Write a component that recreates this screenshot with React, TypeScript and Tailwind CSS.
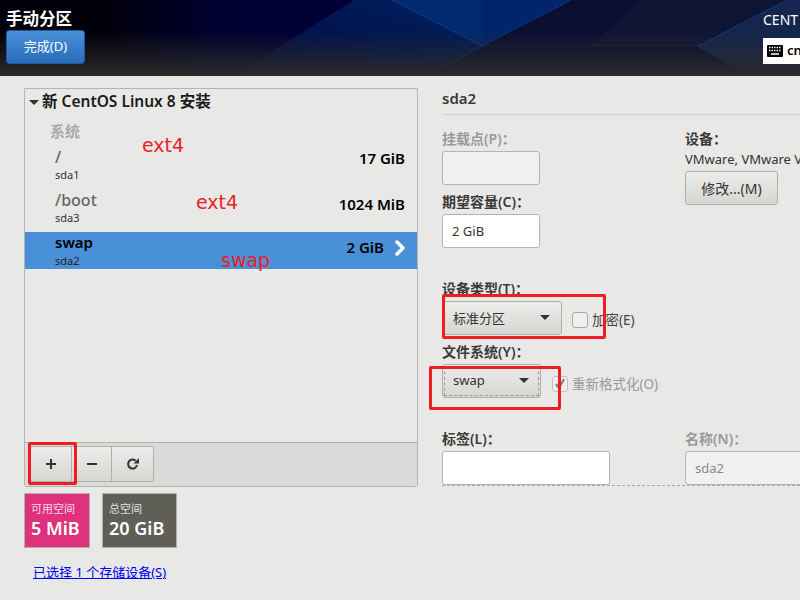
import { ChevronRight } from 'lucide-react'

const FONT = "font-['Noto_Sans','Noto_Sans_CJK_SC',sans-serif]"

function HeaderArt() {
  return (
    <svg className="absolute inset-0" width="800" height="76" viewBox="0 0 800 76">
      <defs>
        <linearGradient id="fade" x1="0" y1="0" x2="0" y2="1">
          <stop offset="0" stopColor="#2a2a2a" stopOpacity="0" />
          <stop offset="0.4" stopColor="#2a2a2a" stopOpacity="0" />
          <stop offset="1" stopColor="#2a2a2a" stopOpacity="1" />
        </linearGradient>
        <linearGradient id="sweep" x1="0" y1="0" x2="1" y2="0">
          <stop offset="0" stopColor="#00000a" />
          <stop offset="0.4" stopColor="#000030" />
          <stop offset="1" stopColor="#00003a" />
        </linearGradient>
        <linearGradient id="wedge" x1="0" y1="1" x2="1" y2="0">
          <stop offset="0" stopColor="#000a40" />
          <stop offset="1" stopColor="#00205f" />
        </linearGradient>
      </defs>
      <rect width="800" height="76" fill="#00000a" />
      <rect x="100" width="300" height="76" fill="url(#sweep)" />
      <polygon points="354,0 392,0 482,46 426,76 234,76" fill="url(#wedge)" />
      <polygon points="392,0 482,0 482,46" fill="#002a70" />
      <polygon points="482,0 571,0 482,46" fill="#02246a" />
      <polygon points="482,46 571,0 800,0 800,76 426,76" fill="#0a0e30" />
      <polygon points="640,0 787,0 698,46 590,46" fill="#0f1434" />
      <polygon points="698,46 787,0 800,0 800,76 750,76" fill="#14264e" />
      <path d="M392 0 L482 46 L571 0 M482 46 L426 76 M698 46 L787 0 M698 46 L750 76" stroke="#0a4aa0" strokeWidth="1" fill="none" opacity="0.7" />
      <path d="M482 46 L698 46" stroke="#1a2c5c" strokeWidth="1" fill="none" opacity="0.6" />
      <rect width="800" height="76" fill="url(#fade)" />
    </svg>
  )
}

function Row({ name, dev, size, sizeClass }: { name: string; dev: string; size: string; sizeClass: string }) {
  return (
    <div className="h-[37px] flex items-center pl-[30px] pr-[12px] leading-none">
      <div className="flex-1">
        <div className="text-[16px] font-medium h-[20px] text-[#666]">{name}</div>
        <div className="text-[11px] text-[#333]">{dev}</div>
      </div>
      <div className={`text-[15px] font-semibold text-black ${sizeClass}`}>{size}</div>
    </div>
  )
}

function Field({ label, width, value, disabled }: { label: string; width: string; value?: string; disabled?: boolean }) {
  return (
    <div>
      <div className={`text-[14px] font-semibold h-[21px] leading-[18px] ${disabled ? 'text-[#999]' : 'text-[#3a3a3a]'}`}>{label}</div>
      <div
        className={`${width} h-[34px] border border-[#b5b5b0] rounded-[3px] text-[13px] leading-[32px] pl-[9px] ${
          disabled ? 'bg-[#f0f0f0] text-[#888]' : 'bg-white text-[#333]'
        }`}
      >
        {value}
      </div>
    </div>
  )
}

function Select({ text, width, focused }: { text: string; width: string; focused?: boolean }) {
  return (
    <div className={`relative ${width} h-[34px] flex items-center justify-between pl-[10px] pr-[11px] border border-[#b0b0aa] rounded-[3px] bg-gradient-to-b from-[#ececea] to-[#d6d6d3] text-[13px] text-[#333]`}>
      <span className={focused ? 'pb-[1px]' : 'pt-[2px]'}>{text}</span>
      <span className="w-0 h-0 mb-[2px] border-x-[5px] border-x-transparent border-t-[5px] border-t-[#2e3436]" />
      {focused && <span className="absolute inset-[1px] border border-dashed border-[#999]" />}
    </div>
  )
}

function ToolButton({ children, last }: { children: React.ReactNode; last?: boolean }) {
  return (
    <div className={`w-[41px] h-[34px] flex items-center justify-center bg-gradient-to-b from-[#ececea] to-[#d6d6d3] text-[#2e3436] ${last ? '' : 'border-r border-[#b0b0aa]'}`}>
      {children}
    </div>
  )
}

function Mark({ className }: { className: string }) {
  return <div className={`absolute border-[3px] rounded-[2px] border-[#ee1c25] ${className}`} />
}

function Note({ text, className }: { text: string; className: string }) {
  return <div className={`absolute text-[19px] leading-none text-[#ee1c25] font-['DejaVu_Sans',sans-serif] ${className}`}>{text}</div>
}

export default function App() {
  return (
    <div className={`${FONT} relative w-[800px] h-[600px] overflow-hidden bg-[#e8e8e6]`}>
      <header className="relative h-[76px] overflow-hidden">
        <HeaderArt />
        <div className="relative flex justify-between">
          <div className="pl-[6px] pt-[7px]">
            <div className="text-[16.5px] font-semibold text-white leading-[24px]">手动分区</div>
            <div className="mt-[-1px] w-[79px] h-[34px] flex items-center justify-center rounded-[3px] border border-[#1c5a9c] bg-gradient-to-b from-[#4a90d9] to-[#2a6cb8] text-[13px] text-white">
              完成(D)
            </div>
          </div>
          <div className="w-[37px] pt-[10px] overflow-hidden whitespace-nowrap">
            <div className="text-[14px] text-white leading-[20px]">CENT</div>
            <div className="mt-[8px] w-[37px] h-[26px] bg-white flex items-center gap-[4px] pl-[4px]">
              <svg width="16" height="12" viewBox="0 0 16 12" className="shrink-0">
                <rect width="16" height="12" rx="1" fill="#000" />
                <path d="M2 2.5h12M2 5.5h12" stroke="#fff" strokeWidth="1.5" strokeDasharray="1.5 1" />
                <path d="M4 9h8" stroke="#fff" strokeWidth="1.5" />
              </svg>
              <span className="text-[13px] font-semibold text-black">cn</span>
            </div>
          </div>
        </div>
      </header>

      <main className="flex">
        <section className="w-[442px] pl-[24px] pt-[12px] shrink-0">
          <div className="w-[394px] h-[399px] border border-[#b5b5b0] rounded-b-[3px] flex flex-col">
            <div className="flex items-center h-[26px] pl-[4px] gap-[3px] text-[15.5px] font-semibold text-[#1a1a1a]">
              <span className="w-0 h-0 border-x-[5px] border-x-transparent border-t-[5px] border-t-[#2e3436]" />
              <span>新 CentOS Linux 8 安装</span>
            </div>
            <div className="pl-[25px] h-[22px] mt-[6px] text-[15px] font-semibold text-[#aaa] leading-[20px]">系统</div>
            <div className="h-[3px]" />
            <Row name="/" dev="sda1" size="17 GiB" sizeClass="pb-[13px]" />
            <div className="h-[6px]" />
            <Row name="/boot" dev="sda3" size="1024 MiB" sizeClass="pb-[7px]" />
            <div className="h-[6px]" />
            <div className="h-[37px] bg-[#4a90d9] flex items-center pl-[30px] pr-[5px] leading-none">
              <div className="flex-1">
                <div className="text-[15px] font-semibold h-[20px] text-black">swap</div>
                <div className="text-[11px] text-[#222]">sda2</div>
              </div>
              <span className="text-[15px] font-semibold text-black pb-[7px]">2 GiB</span>
              <ChevronRight className="ml-[4px] mb-[6px] text-white" size={24} strokeWidth={3.5} />
            </div>
            <div className="flex-1" />
            <div className="h-[44px] border-t border-[#b5b5b0] bg-[#dadad8] px-[5px] pt-[3px] rounded-b-[3px]">
              <div className="w-[124px] h-[36px] flex border border-[#b0b0aa] rounded-[3px] overflow-hidden">
                <ToolButton>
                  <svg width="12" height="12" viewBox="0 0 12 12"><path d="M6 1v10M1 6h10" stroke="currentColor" strokeWidth="2" /></svg>
                </ToolButton>
                <ToolButton>
                  <svg width="12" height="12" viewBox="0 0 12 12"><path d="M1 6h10" stroke="currentColor" strokeWidth="2" /></svg>
                </ToolButton>
                <ToolButton last>
                  <svg width="14" height="14" viewBox="0 0 14 14" fill="none">
                    <path d="M11 8a4.5 4.5 0 1 1-1.3-4.2" stroke="currentColor" strokeWidth="2" />
                    <path d="M13 1v5.5H7.5z" fill="currentColor" />
                  </svg>
                </ToolButton>
              </div>
            </div>
          </div>

          <div className="flex gap-[12px] mt-[6px]">
            <div className="w-[66px] h-[55px] border border-[#b0b0aa] bg-[#e0317d] text-white pl-[6px] pt-[7px]">
              <div className="text-[11px] leading-[15px] opacity-80">可用空间</div>
              <div className="text-[18px] font-semibold leading-[25px]">5 MiB</div>
            </div>
            <div className="w-[75px] h-[55px] border border-[#b0b0aa] bg-[#5f5f58] text-white pl-[6px] pt-[7px]">
              <div className="text-[11px] leading-[15px] opacity-80">总空间</div>
              <div className="text-[18px] font-semibold leading-[25px]">20 GiB</div>
            </div>
          </div>
          <div className="mt-[14px] ml-[9px] text-[13px] leading-[20px] text-[#0000ee] underline">已选择 1 个存储设备(S)</div>
        </section>

        <section className="flex-1 min-w-0 pt-[11px]">
          <div className="h-[28px] border-b border-[#d0d0ce] text-[15px] font-semibold text-[#3a3a3a] leading-[22px]">sda2</div>
          <div className="flex mt-[15px]">
            <div className="w-[243px] shrink-0 flex flex-col gap-[8px]">
              <Field label="挂载点(P)：" width="w-[98px]" disabled />
              <Field label="期望容量(C)：" width="w-[98px]" value="2 GiB" />
            </div>
            <div className="whitespace-nowrap">
              <div className="text-[14px] font-semibold text-[#3a3a3a] h-[20px] leading-[17px]">设备：</div>
              <div className="text-[13px] text-[#333] h-[21px] leading-[18px]">VMware, VMware V</div>
              <div className="w-[93px] h-[34px] flex items-center justify-center border border-[#b0b0aa] rounded-[3px] bg-gradient-to-b from-[#ececea] to-[#d6d6d3] text-[14px] text-[#333]">修改...(M)</div>
            </div>
          </div>

          <div className="mt-[32px] text-[14px] font-semibold text-[#3a3a3a] h-[21px] leading-[18px]">设备类型(T)：</div>
          <div className="flex">
            <Select text="标准分区" width="w-[120px]" />
            <span className="ml-[10px] mt-[11px] w-[16px] h-[16px] border border-[#a8a8a2] rounded-[3px] bg-[#eeeeec]" />
            <span className="ml-[4px] mt-[9px] text-[13.5px] leading-[20px] text-[#444]">加密(E)</span>
          </div>
          <div className="mt-[8px] text-[14px] font-semibold text-[#3a3a3a] h-[21px] leading-[18px]">文件系统(Y)：</div>
          <div className="flex">
            <Select text="swap" width="w-[99px]" focused />
            <span className="ml-[11px] mt-[12px] w-[16px] h-[16px] flex items-center justify-center border border-[#c0c0bc] rounded-[3px] bg-[#eeeeec]">
              <svg width="12" height="12" viewBox="0 0 12 12"><path d="M2 6l3 4 5-9" stroke="#8a8a88" strokeWidth="2.5" fill="none" /></svg>
            </span>
            <span className="ml-[4px] mt-[10px] text-[13.5px] leading-[20px] text-[#999]">重新格式化(O)</span>
          </div>

          <div className="flex mt-[32px] border-b border-dashed border-[#a8a8a4] h-[56px]">
            <div className="w-[243px] shrink-0">
              <Field label="标签(L)：" width="w-[168px]" />
            </div>
            <div className="flex-1">
              <Field label="名称(N)：" width="w-[140px]" value="sda2" disabled />
            </div>
          </div>
        </section>
      </main>

      <Note text="ext4" className="left-[142px] top-[136px]" />
      <Note text="ext4" className="left-[196px] top-[193px]" />
      <Note text="swap" className="left-[221px] top-[251px]" />
      <Mark className="left-[442px] top-[294px] w-[164px] h-[45px]" />
      <Mark className="left-[429px] top-[366px] w-[132px] h-[44px]" />
      <Mark className="left-[28px] top-[442px] w-[49px] h-[43px]" />
    </div>
  )
}
